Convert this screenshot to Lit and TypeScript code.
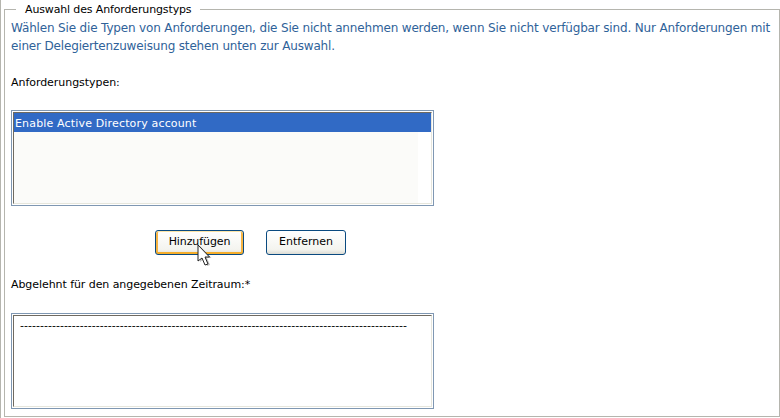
import { LitElement, html, css, svg } from "lit";
import { customElement } from "lit/decorators.js";

@customElement("app-root")
export class AppRoot extends LitElement {
  static styles = css`
    :host {
      display: block;
      width: 780px;
      height: 418px;
      box-sizing: border-box;
      background: #fff;
      border-left: 1px solid #b5b5ae;
      padding: 2px 0 0 3px;
      font-family: "DejaVu Sans", sans-serif;
      font-size: 11px;
      line-height: 14px;
      color: #000;
      overflow: hidden;
    }
    fieldset {
      margin: 0;
      padding: 0 0 0 6px;
      height: 415px;
      box-sizing: border-box;
      border: 1px solid #b5b5ae;
      min-width: 0;
      display: flow-root;
    }
    legend {
      margin-left: 5px;
      padding: 0 9px;
      height: 14px;
      line-height: 16px;
      letter-spacing: -0.14px;
    }
    .intro {
      margin: 3px 0 0;
      color: #2f6299;
      line-height: 18px;
      width: 768px;
      font-size: 12px;
      letter-spacing: -0.16px;
    }
    .label { margin: 0; }
    .l1 { margin-top: 21px; letter-spacing: -0.05px; }
    .l2 { margin-top: 23px; letter-spacing: -0.07px; }
    .box {
      width: 423px;
      height: 96px;
      box-sizing: border-box;
      border: 1px solid #7f97b2;
      padding: 1px;
      background: #fff;
    }
    .inner {
      height: 100%;
      box-sizing: border-box;
      border-style: solid;
      border-width: 1px;
      border-color: #6f6a60 #e6e6dc #e6e6dc #6f6a60;
    }
    .b1 { margin-top: 20px; }
    .b2 { margin-top: 21px; }
    .opt {
      background: #316ac5;
      color: #fff;
      height: 19px;
      line-height: 21px;
      padding-left: 1px;
      letter-spacing: 0.16px;
    }
    .fill { background: #fbfbf9; height: 71px; width: 404px; }
    .dash { padding: 3px 0 0 6px; white-space: nowrap; letter-spacing: 0.02px; }
    .btns {
      display: flex;
      gap: 22px;
      margin: 24px 0 0 144px;
    }
    button {
      font: inherit;
      color: #000;
      height: 25px;
      width: 80px;
      padding: 0 0 1px;
      border: 1px solid #0a4a80;
      border-radius: 3px;
      background: linear-gradient(#fff, #f4f4ef 80%, #dcdcd4);
    }
    button.hot {
      width: 89px;
      letter-spacing: -0.1px;
      box-shadow: inset 0 1px #fce4a8, inset 0 -2px #f5ad2a, inset 2px 0 #f6b444, inset -2px 0 #f6b444;
    }
    .wrap { position: relative; }
    .cursor { position: absolute; left: 186px; top: 14px; width: 20px; height: 26px; }
  `;

  render() {
    const dashes = "-".repeat(97);
    return html`
      <fieldset>
        <legend>Auswahl des Anforderungstyps</legend>
        <p class="intro">Wählen Sie die Typen von Anforderungen, die Sie nicht annehmen werden, wenn Sie nicht verfügbar sind. Nur Anforderungen mit einer Delegiertenzuweisung stehen unten zur Auswahl.</p>
        <p class="label l1">Anforderungstypen:</p>
        <div class="box b1"><div class="inner">
          <div class="opt">Enable Active Directory account</div>
          <div class="fill"></div>
        </div></div>
        <div class="wrap">
          <div class="btns">
            <button class="hot">Hinzufügen</button>
            <button>Entfernen</button>
          </div>
          <svg class="cursor" viewBox="0 0 20 26">
            ${svg`<path d="M1 1 L1 17 L5 14 L8 21 L11 20 L8 13 L12.5 13 Z" fill="#000" opacity=".25" transform="translate(2 1)"/>
            <path d="M1 1 L1 17 L5 14 L8 21 L11 20 L8 13 L12.5 13 Z" fill="#fff" stroke="#222" stroke-width="1"/>`}
          </svg>
        </div>
        <p class="label l2">Abgelehnt für den angegebenen Zeitraum:*</p>
        <div class="box b2"><div class="inner">
          <div class="dash">${dashes}</div>
        </div></div>
      </fieldset>
    `;
  }
}
